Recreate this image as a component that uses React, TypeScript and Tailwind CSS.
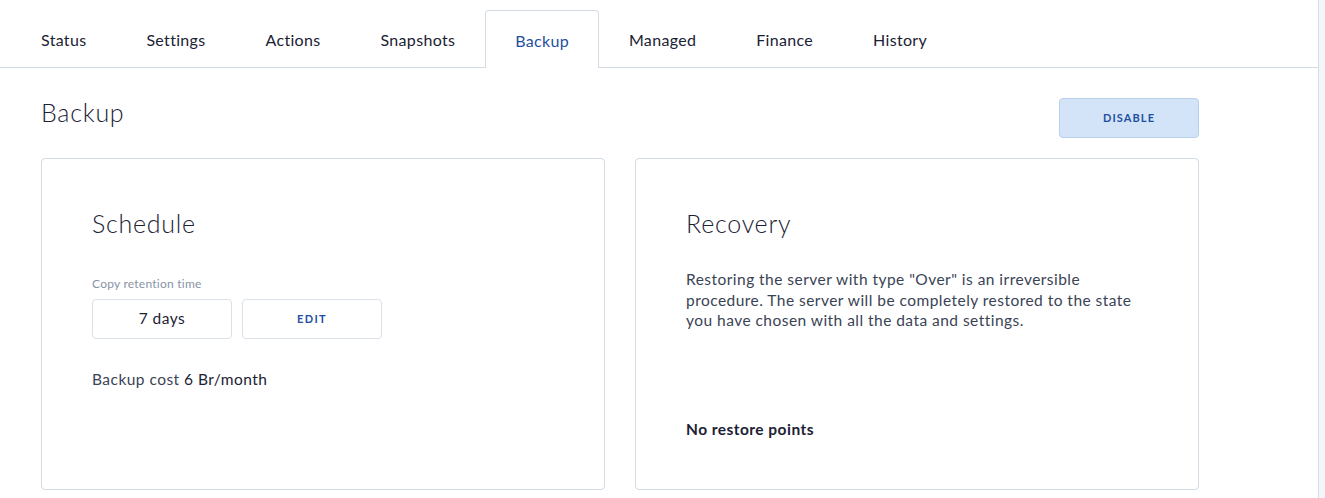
const tabs = ["Status", "Settings", "Actions", "Snapshots", "Backup", "Managed", "Finance", "History"];

export default function App() {
  return (
    <div className="flex h-[498px] w-[1325px] bg-[#f4f5f8] font-['Lato',sans-serif] text-[#1b2234]">
      <div className="flex w-[1319px] flex-col border-r border-[#d7dde5] bg-white">
        <div className="flex h-[68px] items-end border-b border-[#d3dbe4] pl-[11px]">
          {tabs.map((t) => (
            <div
              key={t}
              className={
                t === "Backup"
                  ? "relative -mb-px flex h-[58px] items-center rounded-t-[4px] border border-b-0 border-[#d3dbe4] bg-white px-[29px] pt-[3px] text-[16px] tracking-[0.02em] text-[#1f4fa0]"
                  : "flex h-[58px] items-center border border-transparent px-[29px] pt-[3px] text-[16px] tracking-[0.02em] text-[#1b2234]"
              }
            >
              {t}
            </div>
          ))}
        </div>

        <div className="w-[1199px] pl-[41px]">
          <div className="flex h-[90px] items-start justify-between">
            <h1 className="mt-[28px] text-[25px] font-light leading-[32px] tracking-[0.03em]">Backup</h1>
            <button className="mt-[30px] h-10 w-[140px] rounded-[4px] border border-[#b9d0ec] bg-[#d3e4f8] text-[11px] font-bold tracking-[0.1em] text-[#1f4fa0]">
              DISABLE
            </button>
          </div>

          <div className="grid grid-cols-2 gap-[30px]">
            <div className="h-[332px] rounded-[4px] border border-[#d3dbe4] px-[50px] pt-[49px]">
              <h2 className="text-[25px] font-light leading-[30px] tracking-[0.03em]">Schedule</h2>
              <div className="mt-[38px] text-[12px] leading-4 tracking-[0.02em] text-[#8793a6]">Copy retention time</div>
              <div className="mt-[7px] flex gap-[10px]">
                <div className="flex h-10 w-[140px] items-center justify-center rounded-[4px] border border-[#dbe1e8] text-[15.5px] tracking-[0.03em]">
                  7 days
                </div>
                <button className="h-10 w-[140px] rounded-[4px] border border-[#dbe1e8] text-[11px] font-bold tracking-[0.12em] text-[#1f4fa0]">
                  EDIT
                </button>
              </div>
              <div className="mt-[30px] text-[15.5px] leading-5 tracking-[0.03em] text-[#3a4355]">
                Backup cost <span className="text-[#1b2234]">6 Br/month</span>
              </div>
            </div>

            <div className="flex h-[332px] flex-col rounded-[4px] border border-[#d3dbe4] px-[50px] pt-[49px]">
              <h2 className="text-[25px] font-light leading-[30px] tracking-[0.03em]">Recovery</h2>
              <p className="mt-[31px] w-[455px] text-[15.5px] leading-[20.5px] tracking-[0.03em] text-[#3a4355]">
                Restoring the server with type "Over" is an irreversible procedure. The server will be completely restored to the state you have chosen with all the data and settings.
              </p>
              <div className="mt-[88px] text-[15.5px] font-bold leading-5 tracking-[0.03em]">No restore points</div>
            </div>
          </div>
        </div>
      </div>
    </div>
  );
}
